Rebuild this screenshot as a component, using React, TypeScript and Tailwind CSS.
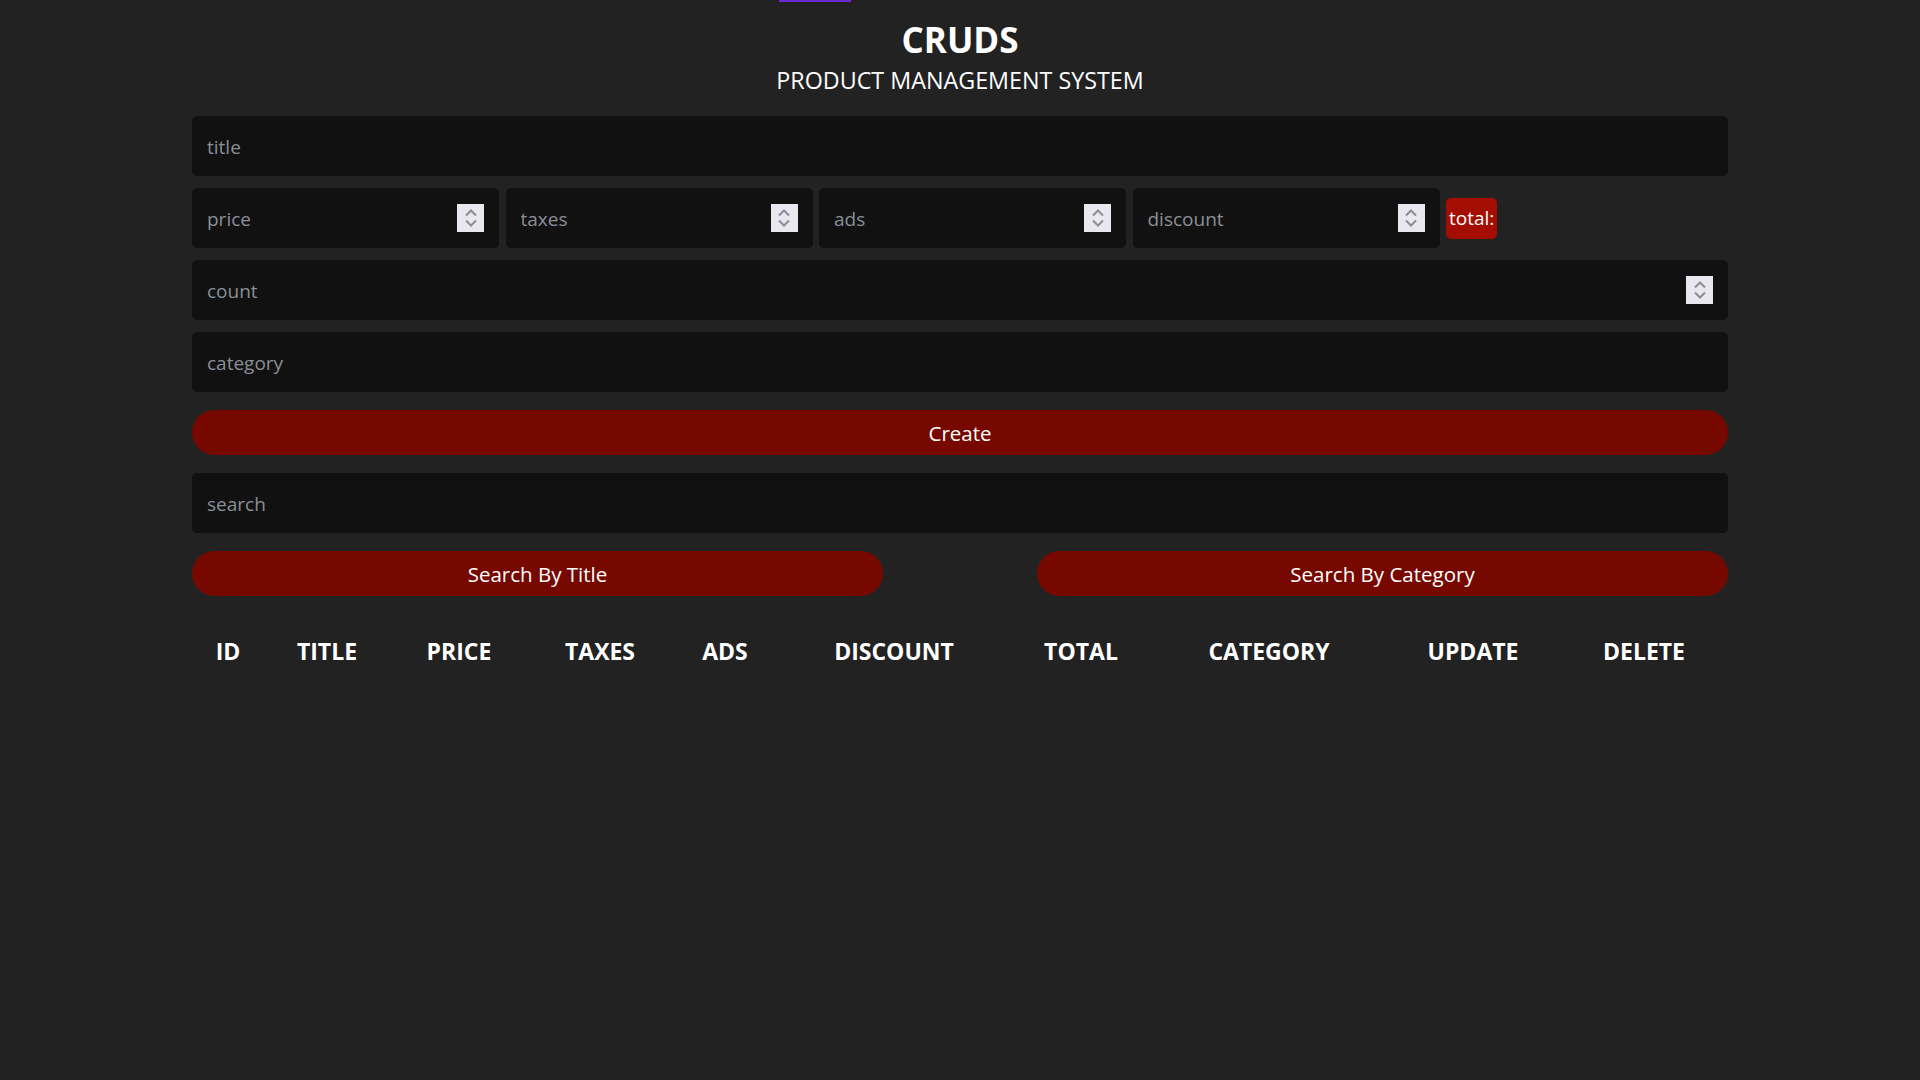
import React from 'react';

function Spinner() {
  return (
    <div className="w-[27px] h-[28px] bg-[#e9e8ee] flex items-center justify-center shrink-0">
      <svg width="14" height="20" viewBox="0 0 14 20" fill="none" stroke="#8e8b98" strokeWidth="2">
        <path d="M2 7.5 L7 2.5 L12 7.5" />
        <path d="M2 12.5 L7 17.5 L12 12.5" />
      </svg>
    </div>
  );
}

function Field({ placeholder, number, className = '' }: { placeholder: string; number?: boolean; className?: string }) {
  return (
    <div className={`h-[60px] bg-[#111111] rounded-[5px] flex items-center pl-[15px] pr-[15px] ${className}`}>
      <input
        placeholder={placeholder}
        className="flex-1 min-w-0 pt-[2px] bg-transparent outline-none text-[19px] text-white placeholder:text-[#8a8f96]"
      />
      { number && <Spinner /> }
    </div>
  );
}

const columns = [
  { name: 'ID', w: 'w-[72px]' },
  { name: 'TITLE', w: 'w-[126px]' },
  { name: 'PRICE', w: 'w-[138px]' },
  { name: 'TAXES', w: 'w-[144px]' },
  { name: 'ADS', w: 'w-[106px]' },
  { name: 'DISCOUNT', w: 'w-[232px]' },
  { name: 'TOTAL', w: 'w-[142px]' },
  { name: 'CATEGORY', w: 'w-[234px]' },
  { name: 'UPDATE', w: 'w-[174px]' },
  { name: 'DELETE', w: 'w-[168px]' },
];

export default function App() {
  return (
    <div className="min-h-[1080px] bg-[#222222] text-white font-['Open_Sans',sans-serif] relative">
      { /* top progress bar */ }
      <div className="absolute top-0 left-[779px] w-[72px] h-[2px] bg-[#6a2bd2]"></div>

      <div className="w-[1536px] mx-auto">
        { /* Header */ }
        <div className="flex flex-col items-center pt-[22px]">
          <h1 className="text-[35px] leading-[35px] font-bold">CRUDS</h1>
          <p className="text-[23.3px] leading-[24px] mt-[11px]">PRODUCT MANAGEMENT SYSTEM</p>
        </div>

        { /* Inputs */ }
        <div className="mt-[24px] flex flex-col">
          <Field placeholder="title" />
          <div className="flex items-center gap-[6.5px] mt-[12px]">
            <Field placeholder="price" number className="w-[307px]" />
            <Field placeholder="taxes" number className="w-[307px]" />
            <Field placeholder="ads" number className="w-[307px]" />
            <Field placeholder="discount" number className="w-[307px]" />
            <span className="h-[41px] px-[3px] pt-[1px] rounded-[5px] bg-[#a30d02] text-[19px] flex items-center">total:</span>
          </div>
          <Field placeholder="count" number className="mt-[12px]" />
          <Field placeholder="category" className="mt-[12px]" />

          <button className="mt-[18px] h-[45px] pt-[1px] rounded-full bg-[#770800] text-[20.5px]">Create</button>

          <Field placeholder="search" className="mt-[18px]" />

          <div className="mt-[18px] flex justify-between">
            <button className="w-[691px] h-[45px] pt-[1px] rounded-full bg-[#770800] text-[20.5px]">Search By Title</button>
            <button className="w-[691px] h-[45px] pt-[1px] rounded-full bg-[#770800] text-[20.5px]">Search By Category</button>
          </div>
        </div>

        { /* Table header */ }
        <div className="mt-[40px] flex">
          { columns.map((c) => (
            <div key={c.name} className={`${c.w} text-center text-[23px] font-bold leading-[30px]`}>
              { c.name }
            </div>
          )) }
        </div>
      </div>
    </div>
  );
}
